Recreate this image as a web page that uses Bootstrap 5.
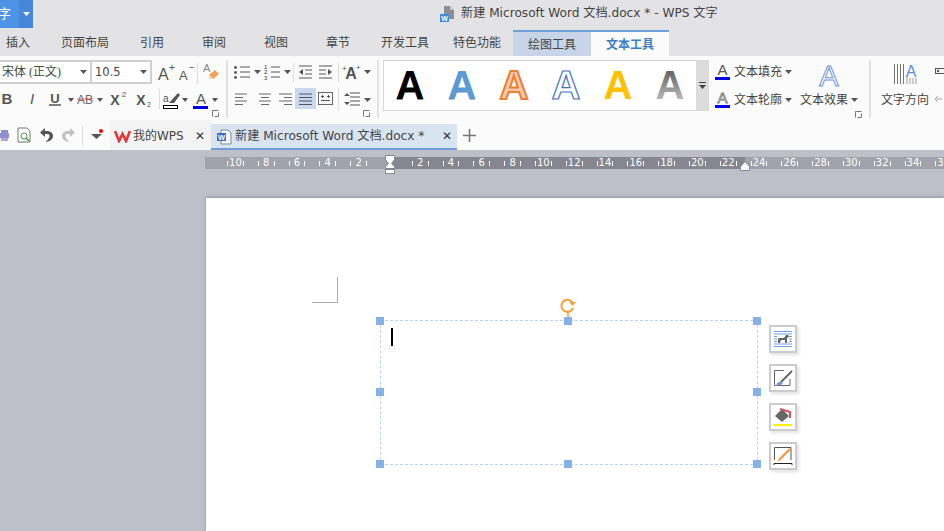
<!DOCTYPE html>
<html lang="zh"><head><meta charset="utf-8"><title>WPS</title>
<link href="https://cdn.jsdelivr.net/npm/bootstrap@5.3.0/dist/css/bootstrap.min.css" rel="stylesheet">
<style>
html,body{width:944px;height:531px;overflow:hidden;background:#bdbfc9;font:12px/1.2 "DejaVu Sans","Noto Sans CJK SC",sans-serif;color:#444}
svg{display:block;flex:none}
svg text{font-family:"Liberation Sans",sans-serif}
.titlebar{height:28px;background:#e3e3e6}
.appbtn-l{width:19px;height:28px;background:#4d94e6;color:#fff;font-size:13px;line-height:28px;padding-right:8px;overflow:hidden;white-space:nowrap}
.appbtn-r{width:14px;height:28px;background:#4787d9}
.doc-title{margin-left:407px;gap:5px;font-size:12.15px;color:#444;white-space:nowrap;padding-bottom:1px}
.tabrow{height:28px;background:#e3e3e6}
.rtab{line-height:30px;white-space:nowrap;color:#444}
.m6{margin-left:6px}.m31{margin-left:31px}.m38{margin-left:38px}.m24{margin-left:24px}
.ctab{width:78px;height:26px;margin-top:2px;text-align:center;line-height:26px;border-top:2px solid #6f9fd8}
.ctab-a{background:#c8d5e8;margin-left:12px}
.ctab-b{background:#fbfbfb;color:#3a7fc4;font-weight:600;margin-left:0}
.ribbon{height:64px;background:#fbfbfb;padding-top:4px;overflow:hidden}
.rgroup{height:58px;flex:none}
.grp1{width:226px}
.grp2{width:153px;border-left:2px solid #e2e2e2;border-right:2px solid #e2e2e2}
.grp3{width:158px;margin-left:2px}
.grp4{border-left:2px solid #e2e2e2;width:75px}
.r1{height:24px}.r2{height:22px;margin-top:4px}.r2b{margin-top:5px}.r3{height:8px;padding-right:7px}
.ps3{padding-left:3px}.ms7{margin-left:7px}.ms11{margin-left:10px}
.combo{height:24px;border:2px solid #d0d0d0;background:#fff;flex:none;line-height:20px;white-space:nowrap}
.combo-f{width:93px;margin-left:-2px;border-right-width:1px;padding-left:2px;font-family:"Liberation Serif","Noto Sans CJK SC",serif;font-size:12px}
.combo-s{width:61px;border-left-width:1px;font-size:11.5px;padding-left:3px}
.gallery{width:326px;height:51px;border:1px solid #d8d8d8;background:#fff;flex:none;margin-left:4px}
.gal-scroll{width:12px;background:#dcdcdc}
.gal-items{width:312px}
.flabel{white-space:nowrap;color:#444;font-size:12px}
.fx-label{margin-top:5px}
.doctabs{height:30px;background:#fbfbfb}
.wpstab{width:101px;height:30px;background:#f3f3f3;margin-left:6px;flex:none;padding-left:4px;padding-top:2px;gap:2px}
.wtab{width:246px;height:26px;margin-top:4px;padding-top:1px;background:#d9e4f1;border-bottom:2px solid #6f9fd8;flex:none;padding-left:5px;gap:3px;font-size:12.15px;white-space:nowrap}
.closex{font-size:12px;color:#333;font-family:"Liberation Sans",sans-serif}
.wtab .closex{margin-left:auto;margin-right:5px}
.wpstab .closex{margin-left:auto;margin-right:6px}
.workspace{height:381px;background:#bdbfc9;padding-top:7px;overflow:hidden}
.ruler{height:12px;margin-left:205px;width:739px;position:relative;background:linear-gradient(to right,#a0a2ac 185px,#85868f 185px 540px,#a0a2ac 540px);color:#fff;font-size:10px;line-height:12px;padding-left:15px;white-space:nowrap}
.rcell{width:30.8px;flex:none;text-align:center;position:relative}
.rcell.lab:before,.rcell.lab:after{content:"";position:absolute;top:4px;height:5px;width:1px;background:#fff}
.rcell.lab:before{left:7px}.rcell.lab:after{right:7px}
.rmark{position:absolute;top:-2px}
.rmark-l{left:179px}.rmark-r{left:535px;top:3px}
.page{position:relative;margin-left:206px;margin-top:29px;height:339px;background:#fff;box-shadow:0 -1px 3px rgba(90,90,100,.45)}
.crop{position:absolute;left:106px;top:79px;width:26px;height:26px;border-right:1px solid #aaa;border-bottom:1px solid #aaa}
.tbox{position:absolute;left:174px;top:122px;width:378px;height:145px;border:1px dashed #b4d2f5}
.hnd{position:absolute;width:8px;height:8px;background:#85b1e8}
.h1{left:-5px;top:-4px}.h2{left:183px;top:-4px}.h3{left:372px;top:-4px}
.h4{left:-5px;top:67px}.h5{left:372px;top:67px}
.h6{left:-5px;top:139px}.h7{left:183px;top:139px}.h8{left:372px;top:139px}
.caretbar{position:absolute;left:10px;top:7px;width:2px;height:18px;background:#000}
.rot{position:absolute;left:178px;top:-24px}
.sidetools{position:absolute;left:388px;top:4px;gap:11px}
.sidebtn{width:28px;height:28px;background:#fff;border:2px solid #ccc;box-shadow:2px 2px 3px rgba(0,0,0,.12)}
.extra-a{margin-top:7px}.extra-b{margin-top:17px}
</style></head>
<body>
<div class="titlebar d-flex align-items-center">
  <div class="appbtn-l d-flex justify-content-end"><span>文字</span></div>
  <div class="appbtn-r d-flex align-items-center justify-content-center"><svg width="7" height="4"><path d="M0 0h7L3.500 4z" fill="#fff"/></svg></div>
  <div class="doc-title d-flex align-items-center">
    <svg width="16" height="16" viewBox="0 0 16 16"><path d="M4 0h6l4 4v9H4z" fill="#8d8f96"/><path d="M10 0l4 4h-4z" fill="#c8c9cd"/><rect x="0" y="8" width="9" height="8" fill="#3f8ade"/><text x="4.500" y="15" font-size="7" font-weight="700" fill="#fff" text-anchor="middle">W</text></svg>
    <span>新建 Microsoft Word 文档.docx * - WPS 文字</span>
  </div>
</div>
<div class="tabrow d-flex">
  <span class="rtab m6">插入</span><span class="rtab m31">页面布局</span><span class="rtab m31">引用</span><span class="rtab m38">审阅</span><span class="rtab m38">视图</span><span class="rtab m38">章节</span><span class="rtab m31">开发工具</span><span class="rtab m24">特色功能</span>
  <span class="ctab ctab-a">绘图工具</span><span class="ctab ctab-b">文本工具</span>
</div>
<div class="ribbon d-flex">
  <!-- font group -->
  <div class="rgroup grp1">
    <div class="r1 d-flex">
      <div class="combo combo-f d-flex align-items-center justify-content-between"><span>宋体 (正文)</span><svg class="me-1" width="7" height="4"><path d="M0 0h7L3.500 4z" fill="#555"/></svg></div>
      <div class="combo combo-s d-flex align-items-center justify-content-between"><span>10.5</span><svg class="me-1" width="7" height="4"><path d="M0 0h7L3.500 4z" fill="#555"/></svg></div>
      <svg width="25" height="24"><text x="6" y="20" font-size="16" fill="#555">A</text><text x="17" y="11" font-size="10" fill="#555">+</text></svg>
      <svg width="20" height="24"><text x="2" y="20" font-size="13" fill="#555">A</text><text x="12" y="11" font-size="10" fill="#555">−</text></svg>
      <svg width="28" height="24"><path d="M.5 3v21" stroke="#ddd"/><text x="6" y="12" font-size="11" fill="#888">A</text><path d="M12 15l6-5 4 4-6 5z" fill="#f4a259"/><path d="M12 15l3 4h-3z" fill="#f8d2ad"/></svg>
    </div>
    <div class="r2 d-flex">
      <svg width="20" height="22"><text x="7" y="16" font-size="15" font-weight="700" fill="#555" text-anchor="middle">B</text></svg>
      <svg width="24" height="22"><text x="12" y="16" font-size="15" font-style="italic" font-family="Liberation Serif" fill="#555" text-anchor="middle">I</text></svg>
      <svg width="32" height="22"><text x="11" y="15" font-size="13" font-weight="700" fill="#555" text-anchor="middle">U</text><path d="M5 17h12" stroke="#555" stroke-width="1.500"/><path d="M24 10h6l-3 4z" fill="#555"/></svg>
      <svg width="30" height="22"><text x="9" y="16" font-size="12" fill="#666" text-anchor="middle">AB</text><path d="M1 11h16" stroke="#e0564f"/><path d="M21 10h6l-3 4z" fill="#555"/></svg>
      <svg width="26" height="22"><text x="9" y="17" font-size="14" font-weight="700" fill="#555" text-anchor="middle">X</text><text x="18" y="9" font-size="8" fill="#555" text-anchor="middle">2</text></svg>
      <svg width="26" height="22"><text x="9" y="17" font-size="14" font-weight="700" fill="#555" text-anchor="middle">X</text><text x="17" y="19" font-size="7" fill="#555" text-anchor="middle">2</text></svg>
      <svg width="34" height="22"><path d="M1.500 1v20" stroke="#ddd"/><text x="5" y="14" font-size="10" fill="#555">a</text><path d="M11 15l9-10 2 2-6 8z" fill="#555"/><rect x="5.500" y="17.500" width="14" height="3" fill="#fff" stroke="#000"/><path d="M24 10h6l-3 4z" fill="#555"/></svg>
      <svg width="30" height="22"><text x="9" y="16" font-size="15" fill="#555" text-anchor="middle">A</text><rect x="1" y="18" width="15" height="3" fill="#0000e6"/><path d="M20 10h6l-3 4z" fill="#555"/></svg>
    </div>
    <div class="r3 d-flex justify-content-end"><svg width="7" height="7"><path d="M.5 6.500v-6h6M2.500 6.500h4v-4" stroke="#777" fill="none"/></svg></div>
  </div>
  <!-- paragraph group -->
  <div class="rgroup grp2">
    <div class="r1 d-flex align-items-center">
      <svg width="33" height="24"><g stroke="#555"><path d="M12 7h10M12 12h10M12 17h10"/></g><g fill="#555"><circle cx="7.500" cy="7.500" r="1.400"/><circle cx="7.500" cy="12.500" r="1.400"/><circle cx="7.500" cy="17.500" r="1.400"/></g><path d="M26 10h7l-3.500 4z" fill="#555"/></svg>
      <svg width="30" height="24"><g stroke="#555"><path d="M10 7h9M10 12h9M10 17h9"/></g><text x="3" y="9" font-size="6" fill="#333">1</text><text x="3" y="14" font-size="6" fill="#333">2</text><text x="3" y="20" font-size="6" fill="#333">3</text><path d="M23 10h7l-3.500 4z" fill="#555"/></svg>
      <svg width="5" height="24"><path d="M2.500 3v20" stroke="#ddd"/></svg>
      <svg width="20" height="24"><path d="M3 6h13M9 10h7M9 14h7M3 18h13" stroke="#555"/><path d="M7 9v6l-4-3z" fill="#555"/></svg>
      <svg width="20" height="24"><path d="M3 6h13M3 10h7M3 14h7M3 18h13" stroke="#555"/><path d="M12 9v6l4-3z" fill="#555"/></svg>
      <svg width="5" height="24"><path d="M2.500 3v20" stroke="#ddd"/></svg>
      <svg width="30" height="24"><text x="10" y="19" font-size="16" font-weight="700" fill="#555" text-anchor="middle">A</text><text x="1" y="11" font-size="8" fill="#555">+</text><text x="15" y="10" font-size="8" fill="#555">+</text><path d="M23 10h7l-3.500 4z" fill="#555"/></svg>
    </div>
    <div class="r2 d-flex">
      <svg width="25" height="22"><path d="M7 6h12M7 9.500h8M7 13h12M7 16.500h8" stroke="#666"/></svg>
      <svg width="23" height="22"><path d="M6 6h12M8 9.500h8M6 13h12M8 16.500h8" stroke="#666"/></svg>
      <svg width="19" height="22"><path d="M3 6h13M8 9.500h8M3 13h13M8 16.500h8" stroke="#666"/></svg>
      <svg width="21" height="22"><rect width="21" height="21" fill="#c8d8ee"/><path d="M4 6h13M4 9.500h13M4 13h13M4 16.500h13" stroke="#555"/></svg>
      <svg width="20" height="22"><path d="M2 4.500h15M2 16.500h15M2.500 4v13M16.500 4v13" stroke="#666"/><path d="M5 8.500h3M11 8.500h3M6.500 7v3M12.500 7v3M5 12.500h9" stroke="#555"/></svg>
      <svg width="5" height="22"><path d="M2.500 0v22" stroke="#ddd"/></svg>
      <svg width="30" height="22"><path d="M9 5h10M9 9h10M9 13h10M9 17h10" stroke="#555"/><path d="M6 5l-3 3h6zM6 17l-3-3h6z" fill="#555"/><path d="M23 10h7l-3.500 4z" fill="#555"/></svg>
    </div>
    <div class="r3 d-flex justify-content-end"><svg width="7" height="7"><path d="M.5 6.500v-6h6M2.500 6.500h4v-4" stroke="#777" fill="none"/></svg></div>
  </div>
  <!-- gallery -->
  <div class="gallery d-flex">
    <div class="gal-items">
      <svg width="312" height="49" viewBox="0 0 312 49">
        <defs><linearGradient id="gg" x1="0" y1="0" x2="0" y2="1"><stop offset="0" stop-color="#4b4b4b"/><stop offset="1" stop-color="#cfcfcf"/></linearGradient>
        <filter id="sh"><feGaussianBlur stdDeviation=".7"/></filter></defs>
        <g font-size="40" font-weight="700" text-anchor="middle">
          <text x="26" y="39" fill="#888" filter="url(#sh)">A</text><text x="26" y="38" fill="#000">A</text>
          <text x="78" y="39" fill="#bbb" filter="url(#sh)">A</text><text x="78" y="38" fill="#5b9bd5">A</text>
          <text x="130" y="38" fill="#f8cbad" stroke="#ed7d31" stroke-width="2">A</text>
          <text x="182" y="38" fill="#fff" stroke="#4472c4" stroke-width="1.200">A</text>
          <text x="234" y="38" fill="#ffc000">A</text>
          <text x="286" y="38" fill="url(#gg)">A</text>
        </g>
      </svg>
    </div>
    <div class="gal-scroll d-flex flex-column align-items-center justify-content-center"><svg width="7" height="7"><path d="M0 .5h7" stroke="#444"/><path d="M0 3h7L3.500 7z" fill="#444"/></svg></div>
  </div>
  <!-- text effects -->
  <div class="rgroup grp3">
    <div class="d-flex">
      <div>
        <div class="r1 d-flex align-items-center gap-1 ps3">
          <svg width="17" height="20"><text x="8.500" y="13" font-size="15" fill="#555" text-anchor="middle">A</text><rect x="1" y="15" width="15" height="3" fill="#0000e6"/></svg>
          <span class="flabel">文本填充</span><svg width="7" height="4"><path d="M0 0h7L3.500 4z" fill="#555"/></svg>
        </div>
        <div class="r2 r2b d-flex align-items-center gap-1 ps3">
          <svg width="17" height="20"><text x="8.500" y="13" font-size="15" fill="#fff" stroke="#777" stroke-width=".8" text-anchor="middle">A</text><rect x="1" y="15" width="15" height="3" fill="#0000e6"/></svg>
          <span class="flabel">文本轮廓</span><svg width="7" height="4"><path d="M0 0h7L3.500 4z" fill="#555"/></svg>
        </div>
      </div>
      <div class="ms7 d-flex flex-column align-items-center">
        <svg width="60" height="33"><text x="30" y="26" font-size="29" fill="#fff" stroke="#6e93dc" text-anchor="middle">A</text></svg>
        <div class="d-flex align-items-center gap-1"><span class="flabel">文本效果</span><svg width="7" height="4"><path d="M0 0h7L3.500 4z" fill="#555"/></svg></div>
      </div>
    </div>
    <div class="r3 d-flex justify-content-end"><svg width="7" height="7"><path d="M.5 6.500v-6h6M2.500 6.500h4v-4" stroke="#777" fill="none"/></svg></div>
  </div>
  <div class="rgroup grp4 d-flex">
    <div class="d-flex flex-column align-items-center ms11">
      <svg width="48" height="28"><path d="M13.500 4v20M16.500 4v20M19.500 4v20M22.500 4v20" stroke="#777"/><path d="M26 16v8M29 18v6M32 18v6M35 18v6" stroke="#999"/><text x="30" y="17" font-size="16" fill="#5a8ee6" text-anchor="middle">A</text></svg>
      <span class="flabel fx-label">文字方向</span>
    </div>
    <div class="ms-2 d-flex flex-column"><svg class="extra-a" width="10" height="8"><rect x=".5" y="1.500" width="9" height="5" fill="none" stroke="#555"/><circle cx="3" cy="4" r="1.200" fill="#555"/></svg><svg class="extra-b" width="10" height="12"><path d="M0 7h7M3 4L0 7l3 3" stroke="#aaa" fill="none"/></svg></div>
  </div>
</div>
<div class="doctabs d-flex align-items-center">
  <svg class="align-self-center" width="104" height="30">
    <path d="M1 10h7v3H1z" fill="#8f8fd0"/><path d="M-2 13h11v5h-11z" fill="#8f8fd0"/><path d="M1 18h7v3H1z" fill="#a9a9dc"/>
    <path d="M18 8h9l3 3v11h-12z" fill="#fff" stroke="#777"/><circle cx="24" cy="16" r="3" fill="none" stroke="#4a9a4a"/><path d="M26 18l3 3" stroke="#4a9a4a" stroke-width="1.500"/>
    <path d="M46 22c6-1 7-4 7-6.500S50 11 47 11h-2V8l-5 4.500 5 4.500v-3h2c1.500 0 2.500.5 2.500 2s-1.500 4-3.500 5.500z" fill="#555"/>
    <path d="M69 22c-6-1-7-4-7-6.500s3-4.500 6-4.500h2V8l5 4.500-5 4.500v-3h-2c-1.500 0-2.500.5-2.500 2s1.500 4 3.500 5.500z" fill="#c3c3c3"/>
    <path d="M82.500 6v20" stroke="#ddd"/>
    <path d="M91 14h11l-5.500 5z" fill="#555"/><circle cx="101" cy="11" r="2" fill="#f00"/>
  </svg>
  <div class="wpstab d-flex align-items-center">
    <svg width="17" height="14"><path d="M1 2l4 10 3.500-7 3.500 7 4-10" fill="none" stroke="#e5383b" stroke-width="2.600"/></svg>
    <span>我的WPS</span><span class="closex">✕</span>
  </div>
  <div class="wtab d-flex align-items-center">
    <svg width="16" height="16" viewBox="0 0 16 16"><path d="M5 1h7l3 3v11H5z" fill="#f2f4f8" stroke="#7d8aa0"/><rect x="1" y="4" width="9" height="8" fill="#3a6fc4"/><text x="5.500" y="11" font-size="7.500" font-weight="700" fill="#fff" text-anchor="middle">W</text></svg>
    <span>新建 Microsoft Word 文档.docx *</span><span class="closex">✕</span>
  </div>
  <svg class="ms-2" width="13" height="13"><path d="M6.500 0v13M0 6.500h13" stroke="#777" stroke-width="1.600"/></svg>
</div>
<div class="workspace">
  <div class="ruler d-flex">
    <span class="rcell lab">10</span><span class="rcell lab">8</span><span class="rcell lab">6</span><span class="rcell lab">4</span><span class="rcell lab">2</span><span class="rcell"></span><span class="rcell lab">2</span><span class="rcell lab">4</span><span class="rcell lab">6</span><span class="rcell lab">8</span><span class="rcell lab">10</span><span class="rcell lab">12</span><span class="rcell lab">14</span><span class="rcell lab">16</span><span class="rcell lab">18</span><span class="rcell lab">20</span><span class="rcell lab">22</span><span class="rcell lab">24</span><span class="rcell lab">26</span><span class="rcell lab">28</span><span class="rcell lab">30</span><span class="rcell lab">32</span><span class="rcell lab">34</span><span class="rcell lab">36</span>
    <svg class="rmark rmark-l" width="12" height="20"><path d="M1.500 .5h9v4l-3 4 3 3v2h-9v-2l3-3-3-4z" fill="#fff" stroke="#888"/><rect x="1.500" y="14.500" width="9" height="4" fill="#fff" stroke="#888"/></svg>
    <svg class="rmark rmark-r" width="10" height="11"><path d="M.5 10.500v-4l4.500-5 4.500 5v4z" fill="#fff" stroke="#888"/></svg>
  </div>
  <div class="page">
    <div class="crop"></div>
    <div class="tbox">
      <svg class="rot" width="18" height="20"><path d="M13 5a6 6 0 1 0 1 6" fill="none" stroke="#f5a033" stroke-width="2"/><path d="M10 5h7l-3.500 4z" fill="#f5a033"/><path d="M9 15v5" stroke="#f5a033" stroke-width="1.500"/></svg>
      <i class="hnd h1"></i><i class="hnd h2"></i><i class="hnd h3"></i><i class="hnd h4"></i><i class="hnd h5"></i><i class="hnd h6"></i><i class="hnd h7"></i><i class="hnd h8"></i>
      <div class="caretbar"></div>
      <div class="sidetools d-flex flex-column">
        <div class="sidebtn d-flex align-items-center justify-content-center"><svg width="20" height="20"><path d="M1 2.500h18M1 5h18M1 15h18M1 17.500h18M1 7.500h3M1 10h3M1 12.500h3M16 7.500h3M16 10h3M16 12.500h3" stroke="#6f9fe6"/><path d="M5 14v-4l1-1h5l2-3h2l1 2-2 1v5h-2v-3H8l-1 3z" fill="#666"/></svg></div>
        <div class="sidebtn d-flex align-items-center justify-content-center"><svg width="20" height="20"><path d="M11 2.500H1.500v15H17V11" fill="none" stroke="#666"/><path d="M19 3L8 14" stroke="#666" stroke-width="2"/><path d="M8 13l-4 2-1 3 5-1 2-2z" fill="#7e97d8"/></svg></div>
        <div class="sidebtn d-flex align-items-center justify-content-center"><svg width="20" height="20"><path d="M2 9l7-7 7 7-7 6z" fill="#666"/><path d="M7 2l10 3v6" fill="none" stroke="#d6545a" stroke-width="2"/><rect x="1" y="17" width="18" height="2" fill="#ffee00"/></svg></div>
        <div class="sidebtn d-flex align-items-center justify-content-center"><svg width="20" height="20"><path d="M1.500 14V1.500H18V14" fill="none" stroke="#555"/><path d="M17 3L6 14" stroke="#f09a4a" stroke-width="2.400"/><path d="M6 14l-1.500 2 2.500-1z" fill="#f09a4a"/><path d="M1 19v-1.500h18V19" fill="none" stroke="#222"/></svg></div>
      </div>
    </div>
  </div>
</div>
</body></html>
